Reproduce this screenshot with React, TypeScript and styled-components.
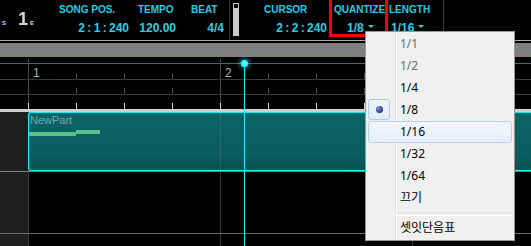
import styled, { createGlobalStyle } from "styled-components";

const GlobalStyle = createGlobalStyle`
  html, body {
    margin: 0;
    padding: 0;
    background: #000;
  }
  * {
    box-sizing: border-box;
  }
`;

// 整个窗口
const Root = styled.div`
  position: relative;
  width: 531px;
  height: 246px;
  overflow: hidden;
  background: #000;
  font-family: "Liberation Sans", Arial, sans-serif;
  display: flex;
  flex-direction: column;
`;

// 顶部 transport 区
const Header = styled.header`
  display: flex;
  align-items: flex-start;
  height: 40px;
`;

const Brand = styled.div`
  width: 59px;
  display: flex;
  align-items: baseline;
  padding: 10px 0 0 2px;
  color: #d6d6d6;
  font-weight: bold;
`;

const BrandSmall = styled.span<{ $ml?: number }>`
  font-size: 6px;
  margin-left: ${(p) => p.$ml ?? 0}px;
`;

const BrandBig = styled.span`
  font-size: 18px;
  line-height: 19px;
  margin-left: 12px;
`;

const Field = styled.div<{ $w: number; $ml: number }>`
  position: relative;
  width: ${(p) => p.$w}px;
  margin-left: ${(p) => p.$ml}px;
  display: flex;
  flex-direction: column;
`;

const Label = styled.div`
  padding-top: 4px;
  font-size: 10px;
  line-height: 12px;
  font-weight: bold;
  color: #1fcde8;
  white-space: nowrap;
`;

const Value = styled.div<{ $align?: "left" | "right"; $pl?: number }>`
  margin-top: 5px;
  padding-left: ${(p) => p.$pl ?? 0}px;
  padding-right: ${(p) => (p.$align === "right" ? 1 : 0)}px;
  font-size: 12px;
  line-height: 14px;
  font-weight: bold;
  color: #2ccfe6;
  text-align: ${(p) => p.$align ?? "left"};
  word-spacing: -1px;
  white-space: nowrap;
`;

const Caret = styled.span`
  display: inline-block;
  margin-left: 4px;
  vertical-align: 4px;
  border-left: 3px solid transparent;
  border-right: 3px solid transparent;
  border-top: 3px solid #2ccfe6;
`;

const Divider = styled.div<{ $ml: number }>`
  margin-left: ${(p) => p.$ml}px;
  width: 1px;
  align-self: stretch;
  background: #3d3d3d;
`;

const Slider = styled.div`
  margin: 3px 0 0 3px;
  width: 6px;
  height: 33px;
  background: #cbcbcb;
  padding: 1px;
`;

const SliderKnob = styled.div`
  width: 4px;
  height: 4px;
  background: #000;
`;

// 标注用的红框
const RedFrame = styled.div`
  position: absolute;
  left: -5px;
  top: -3px;
  width: 59px;
  height: 40px;
  border: 3px solid #ff0000;
  pointer-events: none;
`;

const HeaderRule = styled.div`
  height: 1px;
  margin-bottom: 2px;
  background: #a9a9a9;
`;

const Band = styled.div`
  height: 14px;
  background: #7f7f7f;
`;

// 小节标尺
const Ruler = styled.div`
  display: flex;
  flex-direction: column;
`;

const RulerRow = styled.div<{ $h: number; $tick: string; $major: number; $teal?: boolean; $line?: boolean }>`
  height: ${(p) => p.$h + (p.$line ? 1 : 0)}px;
  border-bottom: ${(p) => (p.$line ? "1px solid #3a3a3a" : "none")};
  background-image: ${(p) =>
      p.$teal ? "linear-gradient(#0d7f87, #0d7f87)," : ""}
    linear-gradient(to right, ${(p) => p.$tick} 1px, transparent 1px),
    linear-gradient(to right, #4a4a4a 1px, transparent 1px);
  background-size: ${(p) => (p.$teal ? "100% 1px," : "")} 48px 6px,
    192px ${(p) => p.$major}px;
  background-position: ${(p) => (p.$teal ? "0 6px," : "")} 28px 100%,
    28px 100%;
  background-repeat: repeat-x;
  display: flex;
  padding-left: 28px;
`;

const BarNum = styled.div`
  width: 192px;
  flex: none;
  padding: 9px 0 0 5px;
  font-size: 12px;
  line-height: 14px;
  color: #a9b6ba;
`;

const RulerFoot = styled.div`
  height: 3px;
  background: #cfcfcf;
`;

// 轨道
const Tracks = styled.div`
  flex: 1;
  display: flex;
  flex-direction: column;
`;

const TrackRow = styled.div<{ $h?: number; $line?: string }>`
  display: flex;
  flex: ${(p) => (p.$h ? "none" : "1")};
  height: ${(p) => (p.$h ? `${p.$h + 1}px` : "auto")};
  border-bottom: ${(p) => (p.$line ? `1px solid ${p.$line}` : "none")};
`;

const TrackHead = styled.div`
  width: 28px;
  flex: none;
  background: #1e1e1e;
`;

const Lane = styled.div`
  position: relative;
  flex: 1;
  overflow: hidden;
  background-image: linear-gradient(to right, #363636 1px, transparent 1px);
  background-size: 192px 100%;
`;

const Part = styled.div`
  position: relative;
  width: 560px;
  height: 100%;
  border: 1px solid #1ee6f0;
  border-radius: 2px;
  box-shadow: inset 0 0 2px rgba(40, 230, 240, 0.5);
  background:
    linear-gradient(to right, rgba(255, 255, 255, 0.09) 1px, transparent 1px) 191px 0 / 192px 100% repeat-x,
    linear-gradient(#0b6264, #0a5d5f 75%, #074f51);
`;

const PartName = styled.div`
  padding: 1px 0 0 1px;
  font-size: 11px;
  line-height: 13px;
  color: #72a9ac;
`;

const Note = styled.div<{ $x: number; $y: number; $w: number }>`
  position: absolute;
  left: ${(p) => p.$x}px;
  top: ${(p) => p.$y}px;
  width: ${(p) => p.$w}px;
  height: 4px;
  background: #5dbf8b;
`;

const Playhead = styled.div`
  position: absolute;
  left: 244px;
  top: 63px;
  bottom: 0;
  width: 1px;
  background: #22e8f2;
  z-index: 1;

  &::before {
    content: "";
    position: absolute;
    left: -3px;
    top: -3px;
    width: 7px;
    height: 7px;
    border-radius: 50%;
    background: #45f2fa;
    box-shadow: 0 0 4px 2px rgba(0, 220, 240, 0.55);
  }
`;

// 右键菜单
const Menu = styled.div`
  position: absolute;
  left: 365px;
  top: 31px;
  width: 150px;
  padding: 1px 2px;
  border: 1px solid #979797;
  background:
    linear-gradient(to right, transparent 29px, #e2e3e3 29px, #e2e3e3 30px, #ffffff 30px, #ffffff 31px, transparent 31px),
    #f0f0f0;
  font-family: "Noto Sans", "Noto Sans CJK KR", sans-serif;
  font-size: 12px;
  z-index: 2;
`;

const MenuItem = styled.div<{ $disabled?: boolean; $hover?: boolean }>`
  position: relative;
  height: 22px;
  line-height: 20px;
  padding-left: 31px;
  border: 1px solid ${(p) => (p.$hover ? "#b4d2ee" : "transparent")};
  border-radius: 3px;
  background: ${(p) =>
    p.$hover ? "linear-gradient(#f3f7fc, #e5eef9)" : "transparent"};
  color: ${(p) => (p.$disabled ? "#6d6d6d" : "#000")};
`;

const Check = styled.div`
  position: absolute;
  left: -1px;
  top: -1px;
  width: 22px;
  height: 21px;
  border: 1px solid #aecdea;
  border-radius: 3px;
  background: linear-gradient(#eef4fb, #e2ecf8);
  display: flex;
  align-items: center;
  justify-content: center;

  &::after {
    content: "";
    width: 7px;
    height: 7px;
    border-radius: 50%;
    background: radial-gradient(circle at 35% 35%, #8a8fd8, #2b2f86 70%);
  }
`;

const MenuSep = styled.div`
  height: 8px;
  margin-left: 27px;
  padding-top: 3px;

  &::after {
    content: "";
    display: block;
    height: 2px;
    border-top: 1px solid #e0e0e0;
    border-bottom: 1px solid #ffffff;
  }
`;

const items: { label: string; disabled?: boolean }[] = [
  { label: "1/1", disabled: true },
  { label: "1/2", disabled: true },
  { label: "1/4" },
  { label: "1/8" },
  { label: "1/16" },
  { label: "1/32" },
  { label: "1/64" },
  { label: "끄기" },
];

const App = () => (
  <Root>
    <GlobalStyle />
    <Header>
      <Brand>
        <BrandSmall>S</BrandSmall>
        <BrandBig>1</BrandBig>
        <BrandSmall $ml={2}>E</BrandSmall>
      </Brand>
      <Field $w={71} $ml={0}>
        <Label>SONG POS.</Label>
        <Value $align="right">2 : 1 : 240</Value>
      </Field>
      <Field $w={39} $ml={8}>
        <Label>TEMPO</Label>
        <Value $align="right">120.00</Value>
      </Field>
      <Field $w={34} $ml={14}>
        <Label>BEAT</Label>
        <Value $align="right">4/4</Value>
      </Field>
      <Divider $ml={4} />
      <Slider>
        <SliderKnob />
      </Slider>
      <Field $w={64} $ml={25}>
        <Label>CURSOR</Label>
        <Value $align="right">2 : 2 : 240</Value>
      </Field>
      <Field $w={50} $ml={6}>
        <Label>QUANTIZE</Label>
        <Value $pl={13}>
          1/8
          <Caret />
        </Value>
        <RedFrame />
      </Field>
      <Field $w={40} $ml={5}>
        <Label>LENGTH</Label>
        <Value $pl={2}>
          1/16
          <Caret />
        </Value>
      </Field>
      <Divider $ml={14} />
    </Header>
    <HeaderRule />
    <Band />

    <Ruler>
      <RulerRow $h={22} $tick="#4a4a4a" $major={20} $teal $line>
        <BarNum>1</BarNum>
        <BarNum>2</BarNum>
        <BarNum>3</BarNum>
      </RulerRow>
      <RulerRow $h={14} $tick="#4a4a4a" $major={15} $line />
      <RulerRow $h={14} $tick="#dcdcdc" $major={14} />
    </Ruler>
    <RulerFoot />

    <Tracks>
      <TrackRow $h={59} $line="#808080">
        <TrackHead />
        <Lane>
          <Part>
            <PartName>NewPart</PartName>
            <Note $x={0} $y={19} $w={47} />
            <Note $x={47} $y={17} $w={24} />
          </Part>
        </Lane>
      </TrackRow>
      <TrackRow $h={61} $line="#6a6a6a">
        <TrackHead />
        <Lane />
      </TrackRow>
      <TrackRow>
        <TrackHead />
        <Lane />
      </TrackRow>
    </Tracks>

    <Playhead />

    <Menu>
      {items.map((it) => (
        <MenuItem key={it.label} $disabled={it.disabled} $hover={it.label === "1/16"}>
          {it.label === "1/8" && <Check />}
          {it.label}
        </MenuItem>
      ))}
      <MenuSep />
      <MenuItem>셋잇단음표</MenuItem>
    </Menu>
  </Root>
);

export default App;
